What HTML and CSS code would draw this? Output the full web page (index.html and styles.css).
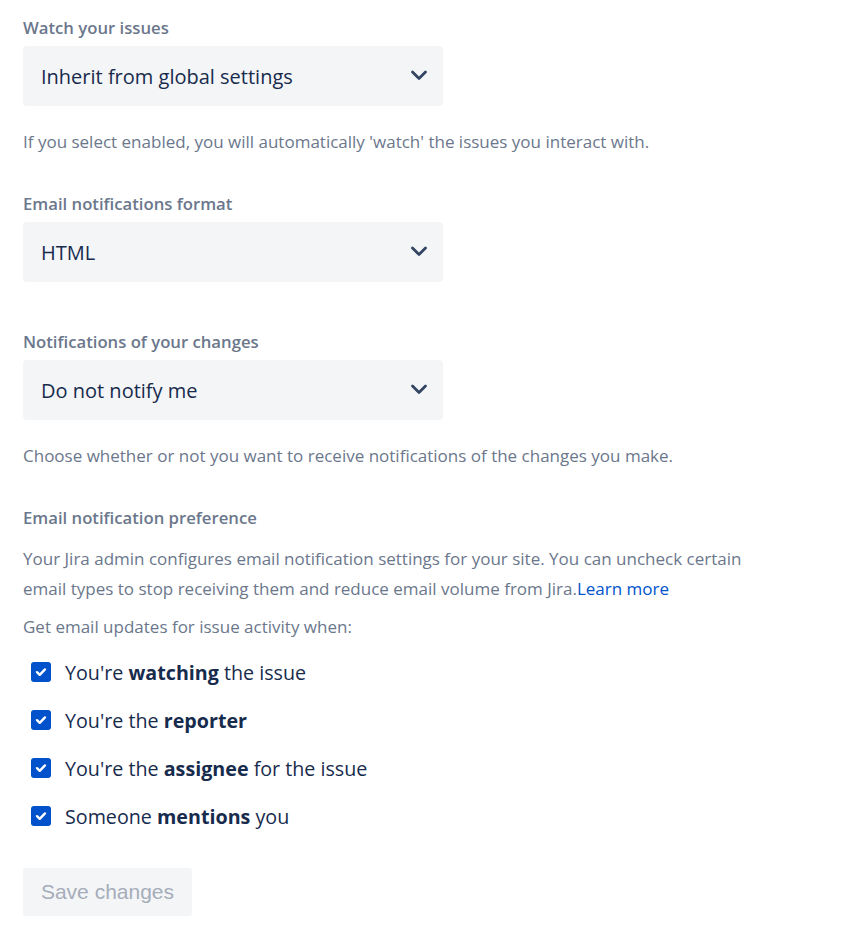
FILE: index.html
```html
<!DOCTYPE html>
<html>
<head>
<meta charset="utf-8">
<link rel="stylesheet" href="styles.css">
</head>
<body>
<div class="page">
  <div class="field">
    <div class="label">Watch your issues</div>
    <div class="select"><span>Inherit from global settings</span><svg class="chev" width="24" height="24" viewBox="0 0 24 24"><path d="M5.5 9l6.5 6.5 6.5-6.5" fill="none" stroke="#344563" stroke-width="2.8" stroke-linecap="round" stroke-linejoin="round"/></svg></div>
    <div class="help">If you select enabled, you will automatically 'watch' the issues you interact with.</div>
  </div>
  <div class="field">
    <div class="label">Email notifications format</div>
    <div class="select"><span>HTML</span><svg class="chev" width="24" height="24" viewBox="0 0 24 24"><path d="M5.5 9l6.5 6.5 6.5-6.5" fill="none" stroke="#344563" stroke-width="2.8" stroke-linecap="round" stroke-linejoin="round"/></svg></div>
  </div>
  <div class="field gap-top">
    <div class="label">Notifications of your changes</div>
    <div class="select"><span>Do not notify me</span><svg class="chev" width="24" height="24" viewBox="0 0 24 24"><path d="M5.5 9l6.5 6.5 6.5-6.5" fill="none" stroke="#344563" stroke-width="2.8" stroke-linecap="round" stroke-linejoin="round"/></svg></div>
    <div class="help">Choose whether or not you want to receive notifications of the changes you make.</div>
  </div>
  <div class="pref">
    <div class="pref-label">Email notification preference</div>
    <p class="pref-text">Your Jira admin configures email notification settings for your site. You can uncheck certain email types to stop receiving them and reduce email volume from Jira.<a class="learn" href="#">Learn more</a></p>
    <p class="pref-text small">Get email updates for issue activity when:</p>
    <ul class="checks">
      <li><span class="box"><svg width="20" height="20" viewBox="0 0 20 20"><path d="M6 10.2l2.7 2.6 5.3-5.4" fill="none" stroke="#fff" stroke-width="2.4" stroke-linecap="round" stroke-linejoin="round"/></svg></span><span>You're <b>watching</b> the issue</span></li>
      <li><span class="box"><svg width="20" height="20" viewBox="0 0 20 20"><path d="M6 10.2l2.7 2.6 5.3-5.4" fill="none" stroke="#fff" stroke-width="2.4" stroke-linecap="round" stroke-linejoin="round"/></svg></span><span>You're the <b>reporter</b></span></li>
      <li><span class="box"><svg width="20" height="20" viewBox="0 0 20 20"><path d="M6 10.2l2.7 2.6 5.3-5.4" fill="none" stroke="#fff" stroke-width="2.4" stroke-linecap="round" stroke-linejoin="round"/></svg></span><span>You're the <b>assignee</b> for the issue</span></li>
      <li><span class="box"><svg width="20" height="20" viewBox="0 0 20 20"><path d="M6 10.2l2.7 2.6 5.3-5.4" fill="none" stroke="#fff" stroke-width="2.4" stroke-linecap="round" stroke-linejoin="round"/></svg></span><span>Someone <b>mentions</b> you</span></li>
    </ul>
  </div>
  <button class="save" disabled>Save changes</button>
</div>
</body>
</html>
```
FILE: styles.css
```css
html, body { margin: 0; padding: 0; background: #fff; }
body { font-family: "Open Sans", "Noto Sans", sans-serif; color: #172B4D; }
.page { padding: 17px 23px 0 23px; }
.field { display: flex; flex-direction: column; }
.label { font-size: 16.7px; font-weight: 600; color: #6B778C; line-height: 22px; margin-bottom: 7px; }
.select { width: 420px; height: 60px; box-sizing: border-box; background: #F4F5F7; border-radius: 4px; display: flex; align-items: center; justify-content: space-between; padding: 0 12px 0 18px; font-size: 20px; color: #172B4D; }
.chev { margin-top: -2px; }
.help { font-size: 17px; color: #6B778C; margin-top: 25px; line-height: 22px; margin-bottom: 40px; }
.gap-top { margin-top: 49px; }
.pref-label { font-size: 16.7px; font-weight: 600; color: #6B778C; line-height: 22px; margin-bottom: 15px; }
.pref-text { margin: 0; font-size: 17px; color: #6B778C; line-height: 30px; max-width: 725px; }
.learn { color: #0052CC; text-decoration: none; }
.pref-text.small { margin-top: 8px; }
.checks { list-style: none; margin: 6px 0 0 0; padding: 0 0 0 8px; }
.checks li { display: flex; align-items: center; height: 48px; font-size: 19.7px; color: #172B4D; gap: 14px; }
.checks b { font-weight: 700; }
.box { width: 20px; height: 20px; background: #0052CC; border-radius: 3px; display: flex; }
.save { margin-top: 28px; width: 169px; height: 48px; border: none; border-radius: 3px; background: #F4F5F7; color: #A5ADBA; font-family: "Liberation Sans", Arial, sans-serif; font-size: 21px; padding: 0; }
```
